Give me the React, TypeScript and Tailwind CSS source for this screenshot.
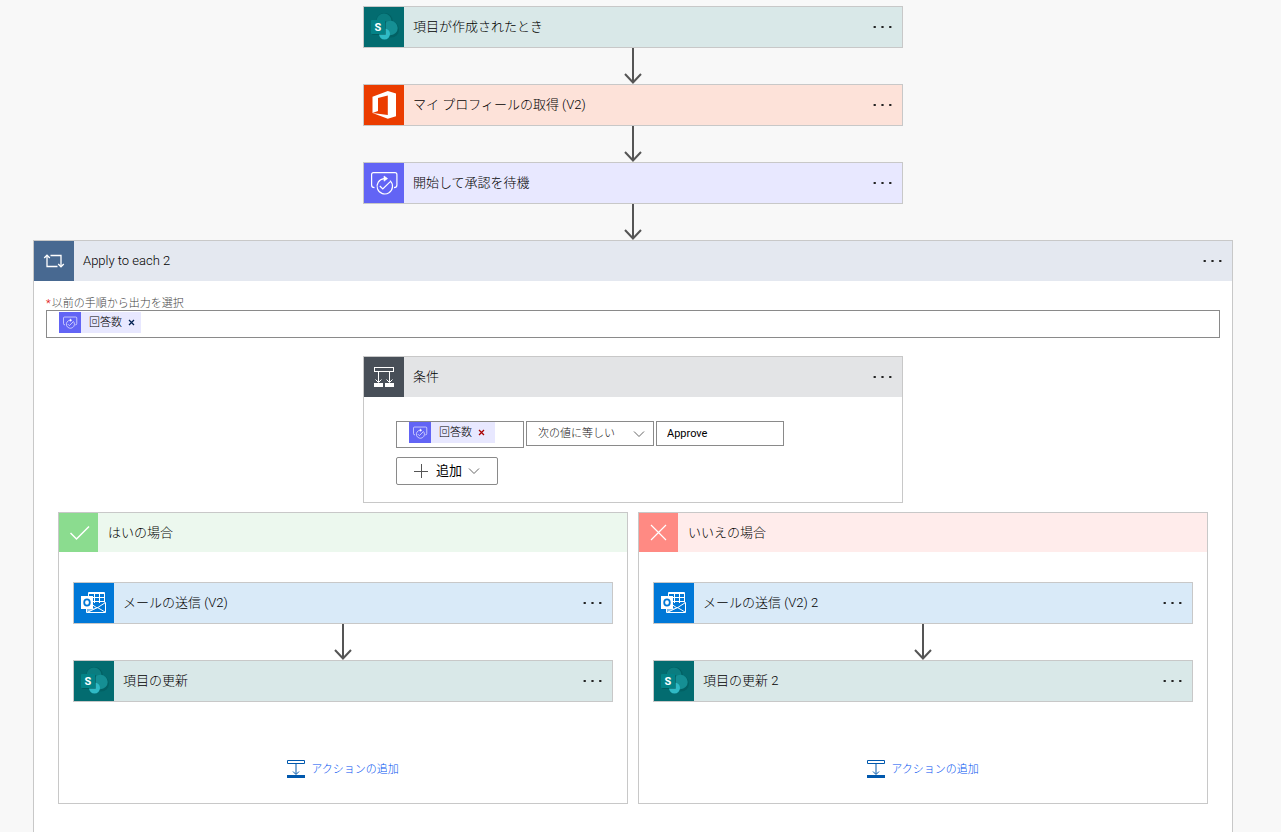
import type { ReactNode } from 'react';
import clsx from 'clsx';

const SharePointIcon = () => (
    <svg viewBox="0 0 40 40" className="size-10 shrink-0 bg-[#036c70]" aria-hidden="true">
        <circle cx="20.5" cy="14.5" r="8.5" fill="#025558" opacity="0.5" />
        <circle cx="27" cy="22.5" r="8" fill="#025558" opacity="0.5" />
        <circle cx="20" cy="14" r="7.5" fill="#0b7d80" />
        <circle cx="26.5" cy="21" r="7.2" fill="#158f94" />
        <circle cx="20.5" cy="27" r="5.5" fill="#2fbac5" />
        <rect x="8" y="14" width="14" height="14" rx="1" fill="#024b4e" opacity="0.5" />
        <rect x="7" y="13" width="14" height="14" rx="1" fill="#038387" />
        <text x="14" y="24" textAnchor="middle" fontSize="11" fontWeight="700" fill="#fff">
            S
        </text>
    </svg>
);

const OfficeIcon = () => (
    <svg viewBox="0 0 40 40" className="size-10 shrink-0 bg-[#eb3c00]" aria-hidden="true">
        <path
            d="M8.5 28V11.8L23.8 6L32 8.6V31.2L23.8 33.8L8.5 28L23.8 30V10.6L14 13V26L8.5 28Z"
            fill="#fff"
        />
    </svg>
);

const ApprovalIcon = ({ className }: { className: string }) => (
    <svg
        viewBox="0 0 40 40"
        className={clsx('shrink-0 bg-[#6264f5]', className)}
        fill="none"
        stroke="#fff"
        strokeWidth="1.2"
        aria-hidden="true"
    >
        <path d="M10.5 24.6Q7.6 24.6 7.6 22V11.5Q7.6 9.6 9.5 9.6H31Q32.9 9.6 32.9 11.5V22Q32.9 24.6 30 24.6" />
        <path d="M26 17.6A7.7 7.7 0 1 1 20 15.6" />
        <path d="M20 13L23.6 15.6L20 18.2Z" fill="#fff" strokeWidth="0.6" />
        <path d="M15.8 23L18.8 26L26 18.8" />
    </svg>
);

const LoopIcon = () => (
    <svg
        viewBox="0 0 40 40"
        className="size-10 shrink-0 bg-[#486991]"
        fill="none"
        stroke="#fff"
        strokeWidth="1.3"
        aria-hidden="true"
    >
        <path d="M13 14.5V25.5H23.5" />
        <path d="M10.2 17L13 14.2L15.8 17" />
        <path d="M16.5 14.5H27V25.5" />
        <path d="M24.2 23L27 25.8L29.8 23" />
    </svg>
);

const ConditionIcon = () => (
    <svg
        viewBox="0 0 40 40"
        className="size-10 shrink-0 bg-[#484f58]"
        fill="none"
        stroke="#fff"
        aria-hidden="true"
    >
        <rect x="10.5" y="10.5" width="19" height="4" />
        <path d="M14.5 15V25M11.5 22.5L14.5 25.5L17.5 22.5" />
        <path d="M25.5 15V25M22.5 22.5L25.5 25.5L28.5 22.5" />
        <path d="M10 26H19V30H10ZM21 26H30V30H21Z" fill="#fff" stroke="none" />
    </svg>
);

const OutlookIcon = () => (
    <svg viewBox="0 0 40 40" className="size-10 shrink-0 bg-[#0078d7]" aria-hidden="true">
        <g fill="none" stroke="#fff" strokeWidth="1">
            <path d="M14.5 13V9.5H30.5V19.5M14 10.5H30M20.5 11V20M25.5 11V20M18 14.5H30M18 18.5H30" />
            <path d="M12.5 25V29.5H31.5V19.5L23 25L18 21.5" />
            <path d="M31 29L23.5 24.5L14 29" />
        </g>
        <path d="M13 25H18L22 25.5L14 29.5H13Z" fill="#fff" opacity="0.5" />
        <rect x="7" y="13" width="12" height="13" fill="#fff" />
        <ellipse cx="13" cy="19.5" rx="2.8" ry="3.2" fill="none" stroke="#0078d7" strokeWidth="1.8" />
    </svg>
);

const CheckIcon = () => (
    <svg viewBox="0 0 39 39" className="size-[39px] shrink-0 bg-[#8bdc8f]" aria-hidden="true">
        <path d="M11.5 20L17.5 26L30 13.5" fill="none" stroke="#fff" strokeWidth="1.5" />
    </svg>
);

const CrossIcon = () => (
    <svg viewBox="0 0 39 39" className="size-[39px] shrink-0 bg-[#ff8a83]" aria-hidden="true">
        <path d="M12 12L27 27M27 12L12 27" fill="none" stroke="#fff" strokeWidth="1.2" />
    </svg>
);

const Chevron = ({ className }: { className?: string }) => (
    <svg viewBox="0 0 12 8" className={clsx('h-2 w-3', className)} aria-hidden="true">
        <path d="M1 1.5L6 6.5L11 1.5" fill="none" stroke="#666" />
    </svg>
);

const Connector = () => (
    <svg viewBox="0 0 18 36" className="mx-auto h-9 w-[18px]" aria-hidden="true">
        <path d="M9 0V34M1 26L9 34.5L17 26" fill="none" stroke="#555" strokeWidth="2" />
    </svg>
);

const MenuButton = () => (
    <button type="button" aria-label="メニュー" className="mr-2.5 flex h-10 w-5 items-center">
        <svg viewBox="0 0 20 4" className="h-1 w-5" fill="#222" aria-hidden="true">
            <rect x="1.6" y="1" width="2.2" height="2" />
            <rect x="9.4" y="1" width="2.2" height="2" />
            <rect x="17.2" y="1" width="2.2" height="2" />
        </svg>
    </button>
);

type HeaderProps = { icon: ReactNode; title: string; color: string };

const CardHeader = ({ icon, title, color }: HeaderProps) => (
    <div className={clsx('flex h-10 items-center', color)}>
        {icon}
        <span className="flex-1 truncate pl-[9px]">{title}</span>
        <MenuButton />
    </div>
);

const ActionCard = (props: HeaderProps) => (
    <div className="mx-auto w-full max-w-[540px] border border-[#c8c8c8]">
        <CardHeader {...props} />
    </div>
);

const Token = ({ className, close }: { className: string; close: string }) => (
    <span className={clsx('flex h-[21px] items-center bg-[#e8e8ff]', className)}>
        <ApprovalIcon className="h-[21px] w-[22px]" />
        <span className="pt-0.5 pr-1.5 pl-2">回答数</span>
        <button type="button" aria-label="削除" className={close}>
            <svg viewBox="0 0 7 7" className="size-[7px]" aria-hidden="true">
                <path d="M1 1L6 6M6 1L1 6" fill="none" stroke="currentColor" strokeWidth="1.3" />
            </svg>
        </button>
    </span>
);

type BranchProps = {
    icon: ReactNode;
    title: string;
    color: string;
    mailTitle: string;
    updateTitle: string;
};

const Branch = ({ icon, title, color, mailTitle, updateTitle }: BranchProps) => (
    <section className="min-w-0 flex-1 border border-[#c8c8c8] bg-white">
        <div className={clsx('flex items-center', color)}>
            {icon}
            <h2 className="pl-2.5">{title}</h2>
        </div>
        <div className="px-3.5 pt-[30px] pb-[25px]">
            <ActionCard icon={<OutlookIcon />} title={mailTitle} color="bg-[#d9eaf8]" />
            <Connector />
            <ActionCard icon={<SharePointIcon />} title={updateTitle} color="bg-[#d9e8e8]" />
            <button
                type="button"
                className="mx-auto mt-[58px] flex h-[18px] items-center gap-1.5 text-[11px] text-[#0050f0]"
            >
                <svg viewBox="0 0 18 18" className="size-[18px]" aria-hidden="true">
                    <path
                        d="M0.5 0.5H17.5V3.5H0.5ZM9 4V14M6 11.5L9 14.5L12 11.5"
                        fill="none"
                        stroke="#0058ad"
                    />
                    <rect y="15" width="18" height="3" fill="#0058ad" />
                </svg>
                <span className="pt-0.5">アクションの追加</span>
            </button>
        </div>
    </section>
);

export default function App() {
    return (
        <main className="flex min-h-screen flex-col bg-[#f8f8f8] pt-1.5 pr-[15px] font-[Roboto,'Noto_Sans_CJK_JP',sans-serif] text-[13px] font-light text-black">
            <ActionCard
                icon={<SharePointIcon />}
                title="項目が作成されたとき"
                color="bg-[#d9e8e8]"
            />
            <Connector />
            <ActionCard
                icon={<OfficeIcon />}
                title="マイ プロフィールの取得 (V2)"
                color="bg-[#fde2d9]"
            />
            <Connector />
            <ActionCard
                icon={<ApprovalIcon className="size-10" />}
                title="開始して承認を待機"
                color="bg-[#e8e8ff]"
            />
            <Connector />

            <section className="mx-auto flex w-full max-w-[1200px] flex-1 flex-col border border-b-0 border-[#c8c8c8] bg-white">
                <CardHeader icon={<LoopIcon />} title="Apply to each 2" color="bg-[#e4e8f0]" />
                <div className="px-3 pt-[17px]">
                    <label
                        htmlFor="outputs"
                        className="block text-[11px] leading-3 text-[#444]"
                    >
                        <span className="mr-px text-[#d00]">*</span>
                        以前の手順から出力を選択
                    </label>
                    <div className="flex h-7 items-start border border-[#8a8a8a] pt-px pl-3 text-[11px]">
                        <Token className="pr-1.5" close="text-[#002050]" />
                        <input id="outputs" type="text" className="h-full min-w-0 flex-1 outline-none" />
                    </div>
                </div>

                <div className="mx-auto mt-[18px] w-full max-w-[540px] border border-[#c8c8c8]">
                    <CardHeader icon={<ConditionIcon />} title="条件" color="bg-[#e3e4e6]" />
                    <div className="px-8 pt-6 pb-[17px]">
                        <div className="flex items-start gap-0.5 text-[11px]">
                            <div className="flex h-[27px] w-32 border border-[#8a8a8a] pl-3">
                                <Token className="pr-2.5" close="text-[#a80000]" />
                                <input
                                    type="text"
                                    aria-label="値の選択"
                                    className="h-full min-w-0 flex-1 outline-none"
                                />
                            </div>
                            <div className="relative w-32">
                                <select
                                    aria-label="演算子"
                                    className="h-[25px] w-full appearance-none border border-[#8a8a8a] pt-0.5 pl-[11px] text-[#111]"
                                >
                                    <option>次の値に等しい</option>
                                </select>
                                <Chevron className="pointer-events-none absolute top-[9px] right-[9px]" />
                            </div>
                            <input
                                type="text"
                                aria-label="値"
                                defaultValue="Approve"
                                className="h-[25px] w-32 border border-[#8a8a8a] px-2.5 font-normal"
                            />
                        </div>
                        <button
                            type="button"
                            className="mt-[9px] flex h-7 w-[102px] items-center justify-center rounded-xs border border-[#8a8a8a] font-normal"
                        >
                            <svg viewBox="0 0 14 14" className="size-3.5" aria-hidden="true">
                                <path d="M0 7.5H14M7.5 0V14" stroke="#555" />
                            </svg>
                            <span className="pr-1.5 pl-2">追加</span>
                            <Chevron />
                        </button>
                    </div>
                </div>

                <div className="mt-[9px] flex gap-2.5 px-6">
                    <Branch
                        icon={<CheckIcon />}
                        title="はいの場合"
                        color="bg-[#ecf8ee]"
                        mailTitle="メールの送信 (V2)"
                        updateTitle="項目の更新"
                    />
                    <Branch
                        icon={<CrossIcon />}
                        title="いいえの場合"
                        color="bg-[#ffeceb]"
                        mailTitle="メールの送信 (V2) 2"
                        updateTitle="項目の更新 2"
                    />
                </div>
            </section>
        </main>
    );
}
